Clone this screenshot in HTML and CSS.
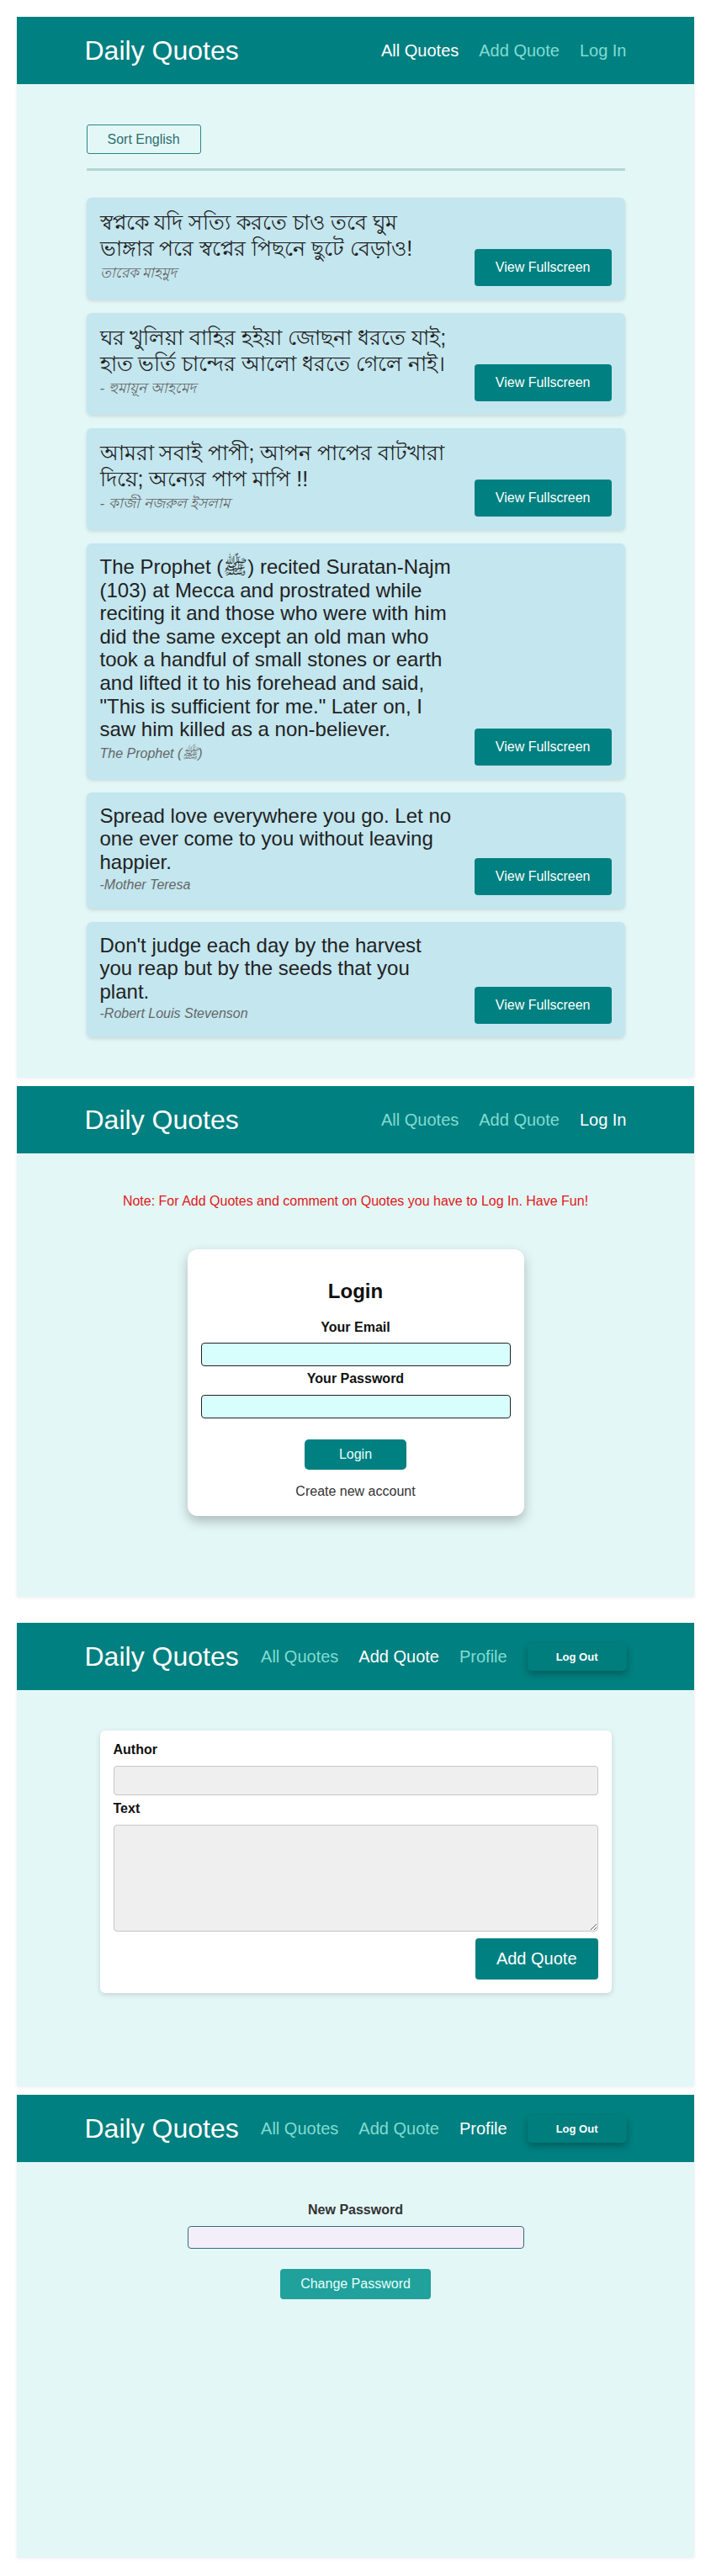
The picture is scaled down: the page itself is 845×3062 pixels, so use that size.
FILE: index.html
```html
<!DOCTYPE html>
<html lang="en">
<head>
<meta charset="utf-8">
<title>Daily Quotes</title>
<link rel="stylesheet" href="styles.css">
</head>
<body>
<div class="page">

  <!-- Screen 1: All quotes -->
  <section class="screen screen--list">
    <header class="topbar">
      <div class="topbar__inner">
        <a class="logo">Daily Quotes</a>
        <nav class="nav">
          <a class="nav__link nav__link--active">All Quotes</a>
          <a class="nav__link">Add Quote</a>
          <a class="nav__link">Log In</a>
        </nav>
      </div>
    </header>
    <main class="content">
      <div class="list">
        <button class="sort-btn">Sort English</button>
        <div class="divider"></div>
        <div class="cards">
          <article class="quote-card">
            <div class="quote-card__body">
              <p class="quote quote--bn">স্বপ্নকে যদি সত্যি করতে চাও তবে ঘুম<br>ভাঙ্গার পরে স্বপ্নের পিছনে ছুটে বেড়াও!</p>
              <p class="author author--bn">তারেক মাহমুদ</p>
            </div>
            <button class="view-btn">View Fullscreen</button>
          </article>
          <article class="quote-card">
            <div class="quote-card__body">
              <p class="quote quote--bn">ঘর খুলিয়া বাহির হইয়া জোছনা ধরতে যাই;<br>হাত ভর্তি চান্দের আলো ধরতে গেলে নাই।</p>
              <p class="author author--bn">- হুমায়ূন আহমেদ</p>
            </div>
            <button class="view-btn">View Fullscreen</button>
          </article>
          <article class="quote-card">
            <div class="quote-card__body">
              <p class="quote quote--bn">আমরা সবাই পাপী; আপন পাপের বাটখারা<br>দিয়ে; অন্যের পাপ মাপি !!</p>
              <p class="author author--bn">- কাজী নজরুল ইসলাম</p>
            </div>
            <button class="view-btn">View Fullscreen</button>
          </article>
          <article class="quote-card">
            <div class="quote-card__body">
              <p class="quote">The Prophet (ﷺ) recited Suratan-Najm (103) at Mecca and prostrated while reciting it and those who were with him did the same except an old man who took a handful of small stones or earth and lifted it to his forehead and said, "This is sufficient for me." Later on, I saw him killed as a non-believer.</p>
              <p class="author author--tall">The Prophet (ﷺ)</p>
            </div>
            <button class="view-btn">View Fullscreen</button>
          </article>
          <article class="quote-card">
            <div class="quote-card__body">
              <p class="quote">Spread love everywhere you go. Let no one ever come to you without leaving happier.</p>
              <p class="author">-Mother Teresa</p>
            </div>
            <button class="view-btn">View Fullscreen</button>
          </article>
          <article class="quote-card">
            <div class="quote-card__body">
              <p class="quote">Don't judge each day by the harvest you reap but by the seeds that you plant.</p>
              <p class="author">-Robert Louis Stevenson</p>
            </div>
            <button class="view-btn">View Fullscreen</button>
          </article>
        </div>
      </div>
    </main>
  </section>

  <!-- Screen 2: Login -->
  <section class="screen screen--login">
    <header class="topbar">
      <div class="topbar__inner">
        <a class="logo">Daily Quotes</a>
        <nav class="nav">
          <a class="nav__link">All Quotes</a>
          <a class="nav__link">Add Quote</a>
          <a class="nav__link nav__link--active">Log In</a>
        </nav>
      </div>
    </header>
    <main class="content">
      <p class="note">Note: For Add Quotes and comment on Quotes you have to Log In. Have Fun!</p>
      <form class="login-card">
        <h2 class="login-card__title">Login</h2>
        <label class="login-card__label">Your Email</label>
        <input class="login-card__input" type="email">
        <label class="login-card__label">Your Password</label>
        <input class="login-card__input" type="password">
        <button class="login-card__btn" type="button">Login</button>
        <p class="login-card__link">Create new account</p>
      </form>
    </main>
  </section>

  <!-- Screen 3: Add quote -->
  <section class="screen screen--add">
    <header class="topbar">
      <div class="topbar__inner">
        <a class="logo">Daily Quotes</a>
        <nav class="nav">
          <a class="nav__link">All Quotes</a>
          <a class="nav__link nav__link--active">Add Quote</a>
          <a class="nav__link">Profile</a>
          <button class="logout-btn">Log Out</button>
        </nav>
      </div>
    </header>
    <main class="content">
      <form class="add-card">
        <label class="add-card__label">Author</label>
        <input class="add-card__input" type="text">
        <label class="add-card__label">Text</label>
        <textarea class="add-card__textarea"></textarea>
        <div class="add-card__actions">
          <button class="add-card__btn" type="button">Add Quote</button>
        </div>
      </form>
    </main>
  </section>

  <!-- Screen 4: Profile -->
  <section class="screen screen--profile">
    <header class="topbar">
      <div class="topbar__inner">
        <a class="logo">Daily Quotes</a>
        <nav class="nav">
          <a class="nav__link">All Quotes</a>
          <a class="nav__link">Add Quote</a>
          <a class="nav__link nav__link--active">Profile</a>
          <button class="logout-btn">Log Out</button>
        </nav>
      </div>
    </header>
    <main class="content">
      <form class="pw-form">
        <label class="pw-form__label">New Password</label>
        <input class="pw-form__input" type="password">
        <button class="pw-form__btn" type="button">Change Password</button>
      </form>
    </main>
  </section>

</div>
</body>
</html>
```

FILE: styles.css
```css
* {
  box-sizing: border-box;
}

html, body {
  margin: 0;
  padding: 0;
  background: #ffffff;
}

body {
  font-family: "Liberation Sans", Arial, sans-serif;
  color: #222;
}

.page {
  padding: 20px 20px 21px;
  display: flex;
  flex-direction: column;
  gap: 10px;
}

.screen {
  background: #e4f7f7;
  box-shadow: 0 1px 4px rgba(0, 0, 0, 0.08);
}

.screen--login {
  min-height: 607px;
}

.screen--add {
  margin-top: 21px;
  min-height: 551px;
}

.screen--profile {
  min-height: 550px;
}

/* Header */
.topbar {
  background: #008080;
  height: 80px;
  display: flex;
  align-items: center;
}

.topbar__inner {
  width: 80%;
  margin: 0 auto;
  display: flex;
  align-items: center;
  justify-content: space-between;
}

.logo {
  color: #ffffff;
  font-size: 32px;
  line-height: 37px;
  white-space: nowrap;
}

.nav {
  display: flex;
  align-items: center;
  gap: 24px;
}

.nav__link {
  color: #80dcd2;
  font-size: 20px;
  line-height: 23px;
  white-space: nowrap;
}

.nav__link--active {
  color: #ffffff;
}

.logout-btn {
  font-family: inherit;
  background: #007d7d;
  color: #ffffff;
  border: none;
  border-radius: 5px;
  font-size: 13px;
  font-weight: bold;
  line-height: 15px;
  padding: 9px 34px;
  box-shadow: 0 4px 8px rgba(0, 0, 0, 0.28);
}

/* Main content */
.content {
  padding-top: 48px;
}

.list {
  width: 640px;
  margin: 0 auto;
  padding-bottom: 48px;
}

.sort-btn {
  font-family: inherit;
  font-size: 16px;
  line-height: 18px;
  color: #2d6f6f;
  background: transparent;
  border: 1px solid #2a8585;
  border-radius: 3px;
  padding: 7.5px 24px;
}

.divider {
  margin-top: 17px;
  height: 3px;
  background: #b2d6d6;
}

.cards {
  margin-top: 32px;
  display: flex;
  flex-direction: column;
  gap: 16px;
}

.quote-card {
  background: #c3e6ef;
  border-radius: 6px;
  box-shadow: 0 2px 4px rgba(0, 0, 0, 0.12);
  padding: 14px 16px 16px;
  display: flex;
  justify-content: space-between;
  align-items: flex-end;
}

.quote-card__body {
  width: 422px;
  padding-bottom: 2px;
}

.quote {
  margin: 0;
  font-size: 24px;
  line-height: 27.6px;
  color: #222;
}

.quote--bn {
  font-size: 25px;
  line-height: 31px;
}

.author {
  margin: 3px 0 0;
  font-size: 16px;
  line-height: 20px;
  font-style: italic;
  color: #666;
}

.author--bn {
  margin-top: 0;
  font-size: 17px;
  line-height: 27px;
}

.author--tall {
  margin-top: 2px;
  line-height: 25px;
}

.view-btn {
  flex: none;
  font-family: inherit;
  background: #008080;
  color: #ffffff;
  border: none;
  border-radius: 4px;
  font-size: 16px;
  line-height: 18px;
  padding: 13px 25px;
}

/* Login screen */
.note {
  margin: 0;
  text-align: center;
  color: #e01818;
  font-size: 16px;
  line-height: 18px;
}

.login-card {
  width: 400px;
  margin: 48px auto 0;
  background: #ffffff;
  border-radius: 12px;
  box-shadow: 0 6px 14px rgba(0, 0, 0, 0.25);
  padding: 16px 16px 20px;
  text-align: center;
  display: flex;
  flex-direction: column;
  align-items: center;
}

.login-card__title {
  margin: 20px 0;
  font-size: 24px;
  line-height: 27.6px;
  font-weight: bold;
  color: #111;
}

.login-card__label {
  display: block;
  font-size: 16px;
  line-height: 18.4px;
  font-weight: bold;
  color: #111;
  margin-bottom: 9px;
}

.login-card__input {
  display: block;
  width: 100%;
  height: 28px;
  background: #d7fdfd;
  border: 1px solid #222;
  border-radius: 4px;
  margin: 0 0 6px;
}

.login-card__btn {
  font-family: inherit;
  margin-top: 19px;
  width: 121px;
  height: 36px;
  background: #008080;
  color: #e8fffb;
  border: none;
  border-radius: 5px;
  font-size: 16px;
}

.login-card__link {
  margin: 17px 0 0;
  font-size: 16px;
  line-height: 18.4px;
  color: #333;
}

/* Add quote screen */
.add-card {
  width: 608px;
  margin: 0 auto;
  background: #ffffff;
  border-radius: 6px;
  box-shadow: 0 2px 6px rgba(0, 0, 0, 0.15);
  padding: 14px 16px 16px;
}

.add-card__label {
  display: block;
  font-size: 16px;
  line-height: 18.4px;
  font-weight: bold;
  color: #111;
  margin-bottom: 9px;
}

.add-card__input {
  display: block;
  width: 100%;
  height: 35.5px;
  background: #efefef;
  border: 1px solid #c6c6c6;
  border-radius: 4px;
  margin: 0 0 7px;
}

.add-card__textarea {
  display: block;
  width: 100%;
  height: 127px;
  background: #efefef;
  border: 1px solid #c6c6c6;
  border-radius: 4px;
  margin: 0 0 8px;
  resize: vertical;
}

.add-card__actions {
  display: flex;
  justify-content: flex-end;
}

.add-card__btn {
  font-family: inherit;
  background: #008080;
  color: #ffffff;
  border: none;
  border-radius: 4px;
  font-size: 20px;
  line-height: 23px;
  padding: 13px 25px;
}

/* Profile screen */
.pw-form {
  width: 400px;
  margin: 0 auto;
  display: flex;
  flex-direction: column;
  align-items: center;
}

.pw-form__label {
  font-size: 16px;
  line-height: 18.4px;
  font-weight: bold;
  color: #333;
  margin-bottom: 9px;
}

.pw-form__input {
  width: 100%;
  height: 27.5px;
  background: #f4eefa;
  border: 1px solid #2f6f7a;
  border-radius: 4px;
  margin: 0;
}

.pw-form__btn {
  font-family: inherit;
  margin-top: 24px;
  background: #20a19c;
  color: #e4fffb;
  border: none;
  border-radius: 4px;
  font-size: 16px;
  line-height: 18px;
  padding: 9px 24px;
}
```
